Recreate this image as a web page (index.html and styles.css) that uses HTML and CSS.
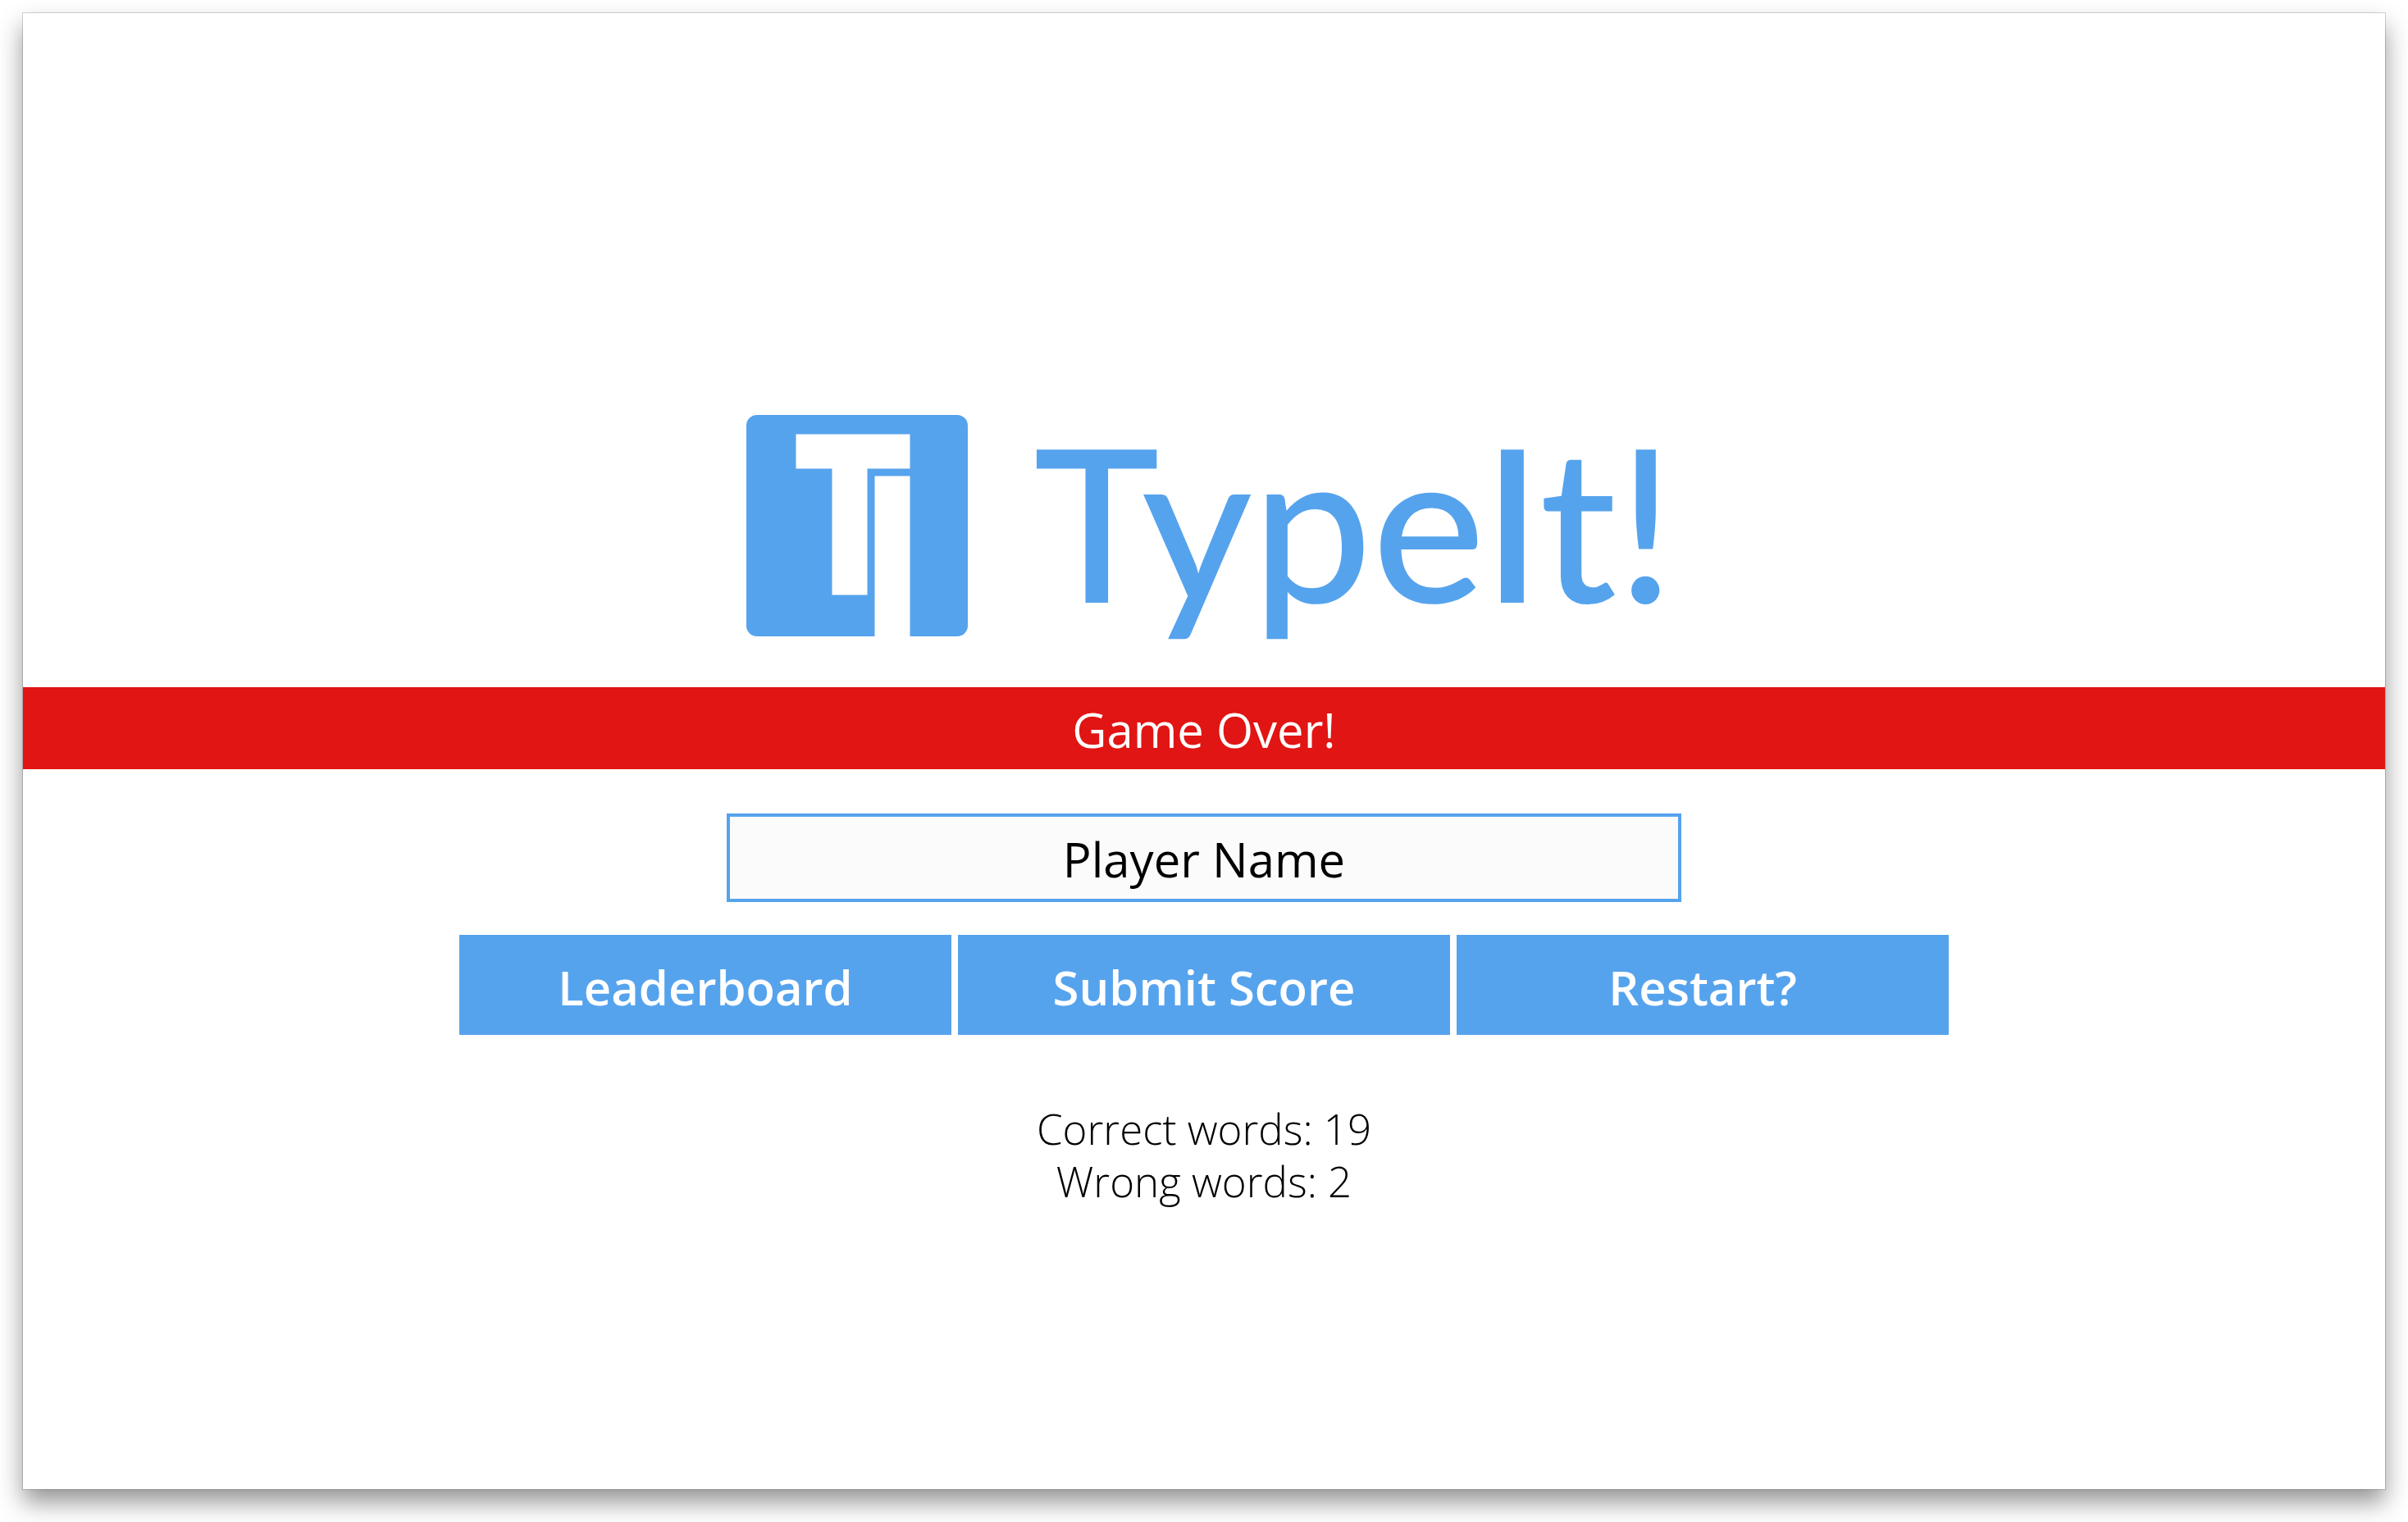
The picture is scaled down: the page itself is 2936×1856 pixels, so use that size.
FILE: index.html
```
<!DOCTYPE html>
<html lang="en">
<head>
<meta charset="utf-8">
<title>TypeIt!</title>
<link rel="stylesheet" href="styles.css">
</head>
<body>
<main class="window">
  <header class="logo">
    <svg class="logo-mark" viewBox="0 0 270 270" aria-hidden="true">
      <path fill="currentColor" fill-rule="evenodd" d="M13 0H257A13 13 0 0 1 270 13V257A13 13 0 0 1 257 270H199.500V74.500H156.500V270H13A13 13 0 0 1 0 257V13A13 13 0 0 1 13 0ZM60.500 23.500V65.500H104.500V219.500H147.500V65.500H199.500V23.500Z"/>
    </svg>
    <h1 class="logo-name">TypeIt!</h1>
  </header>
  <p class="banner" role="status">Game Over!</p>
  <form class="score-form">
    <input class="player-name" type="text" placeholder="Player Name" aria-label="Player Name">
    <div class="actions">
      <button class="action" type="button">Leaderboard</button>
      <button class="action" type="submit">Submit Score</button>
      <button class="action" type="button">Restart?</button>
    </div>
  </form>
  <section class="stats">
    <p>Correct words: 19</p>
    <p>Wrong words: 2</p>
  </section>
</main>
</body>
</html>
```
FILE: styles.css
```
:root {
  --blue: #56a3ed;
  --red: #e11513;
}

* {
  box-sizing: border-box;
}

h1, p {
  margin: 0;
}

body {
  display: flex;
  min-height: 100vh;
  margin: 0;
  padding: 16px 28px 40px;
  background: #fff;
  font-family: "Open Sans", "Noto Sans", sans-serif;
}

.window {
  display: flex;
  flex: 1;
  flex-direction: column;
  padding-top: 490px;
  background: #fff;
  box-shadow: 0 0 0 1px rgba(0, 0, 0, 0.16), 0 16px 28px rgba(0, 0, 0, 0.42);
}

.logo {
  display: flex;
  justify-content: center;
  align-items: center;
  gap: 80px;
  padding-left: 16px;
  color: var(--blue);
}

.logo-mark {
  width: 270px;
  height: 270px;
}

.logo-name {
  padding-bottom: 14px;
  font: 500 260px/256px Lato, sans-serif;
}

.banner {
  margin-top: 62px;
  padding: 12px 12px 8px;
  background: var(--red);
  color: #fff;
  font-size: 58px;
  line-height: 80px;
  text-align: center;
}

.score-form {
  display: flex;
  flex-direction: column;
  align-items: center;
  gap: 40px;
  margin-top: 54px;
}

.player-name {
  width: 1164px;
  max-width: 100%;
  padding: 12px 12px 8px;
  border: 4px solid var(--blue);
  border-radius: 0;
  background: #fbfbfb;
  color: #000;
  font: 400 58px/80px "Open Sans", "Noto Sans", sans-serif;
  text-align: center;
}

.player-name::placeholder {
  color: #000;
  opacity: 1;
}

.actions {
  display: flex;
  flex-wrap: wrap;
  justify-content: center;
  gap: 8px;
}

.action {
  width: 600px;
  padding: 24px 16px 18px;
  border: 0;
  background: var(--blue);
  color: #fff;
  font: 600 58px/80px "Open Sans", "Noto Sans", sans-serif;
}

.stats {
  margin-top: 82px;
  font-size: 51px;
  font-weight: 300;
  line-height: 64px;
  text-align: center;
}
```
